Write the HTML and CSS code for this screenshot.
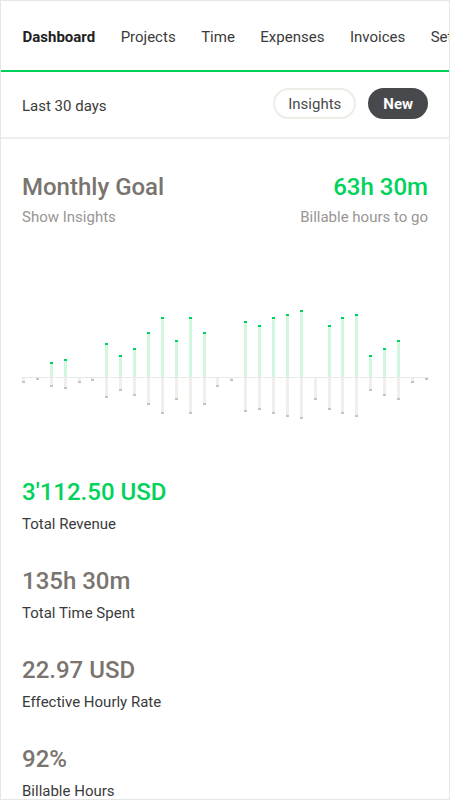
FILE: index.html
```html
<!DOCTYPE html>
<html lang="en">
<head>
  <meta charset="UTF-8" />
  <meta name="viewport" content="width=device-width, initial-scale=1">
  <title>Dashboard</title>
  <link rel="stylesheet" href="styles.css" />
</head>
<body>
  <div class="app">
    <nav class="tabs">
      <a class="tab active" href="#">Dashboard</a>
      <a class="tab" href="#">Projects</a>
      <a class="tab" href="#">Time</a>
      <a class="tab" href="#">Expenses</a>
      <a class="tab" href="#">Invoices</a>
      <a class="tab" href="#">Settings</a>
    </nav>

    <div class="toolbar">
      <span class="range">Last 30 days</span>
      <div class="actions">
        <button class="btn btn-outline">Insights</button>
        <button class="btn btn-dark">New</button>
      </div>
    </div>

    <main class="content">
      <div class="goal">
        <div class="goal-left">
          <h2 class="goal-title">Monthly Goal</h2>
          <p class="muted">Show Insights</p>
        </div>
        <div class="goal-right">
          <div class="goal-value">63h 30m</div>
          <p class="muted">Billable hours to go</p>
        </div>
      </div>

      <div class="chart">
        <div class="day"><div class="up"></div><div class="down"><div class="bar-out" style="height:5px"></div></div></div>
        <div class="day"><div class="up"></div><div class="down"><div class="bar-out" style="height:2px"></div></div></div>
        <div class="day"><div class="up"><div class="bar-in" style="height:15px"></div></div><div class="down"><div class="bar-out" style="height:9px"></div></div></div>
        <div class="day"><div class="up"><div class="bar-in" style="height:18px"></div></div><div class="down"><div class="bar-out" style="height:11px"></div></div></div>
        <div class="day"><div class="up"></div><div class="down"><div class="bar-out" style="height:5px"></div></div></div>
        <div class="day"><div class="up"></div><div class="down"><div class="bar-out" style="height:3px"></div></div></div>
        <div class="day"><div class="up"><div class="bar-in" style="height:34px"></div></div><div class="down"><div class="bar-out" style="height:20px"></div></div></div>
        <div class="day"><div class="up"><div class="bar-in" style="height:22px"></div></div><div class="down"><div class="bar-out" style="height:13px"></div></div></div>
        <div class="day"><div class="up"><div class="bar-in" style="height:29px"></div></div><div class="down"><div class="bar-out" style="height:18px"></div></div></div>
        <div class="day"><div class="up"><div class="bar-in" style="height:45px"></div></div><div class="down"><div class="bar-out" style="height:27px"></div></div></div>
        <div class="day"><div class="up"><div class="bar-in" style="height:60px"></div></div><div class="down"><div class="bar-out" style="height:36px"></div></div></div>
        <div class="day"><div class="up"><div class="bar-in" style="height:37px"></div></div><div class="down"><div class="bar-out" style="height:22px"></div></div></div>
        <div class="day"><div class="up"><div class="bar-in" style="height:60px"></div></div><div class="down"><div class="bar-out" style="height:36px"></div></div></div>
        <div class="day"><div class="up"><div class="bar-in" style="height:45px"></div></div><div class="down"><div class="bar-out" style="height:27px"></div></div></div>
        <div class="day"><div class="up"></div><div class="down"><div class="bar-out" style="height:9px"></div></div></div>
        <div class="day"><div class="up"></div><div class="down"><div class="bar-out" style="height:3px"></div></div></div>
        <div class="day"><div class="up"><div class="bar-in" style="height:56px"></div></div><div class="down"><div class="bar-out" style="height:34px"></div></div></div>
        <div class="day"><div class="up"><div class="bar-in" style="height:52px"></div></div><div class="down"><div class="bar-out" style="height:32px"></div></div></div>
        <div class="day"><div class="up"><div class="bar-in" style="height:60px"></div></div><div class="down"><div class="bar-out" style="height:36px"></div></div></div>
        <div class="day"><div class="up"><div class="bar-in" style="height:63px"></div></div><div class="down"><div class="bar-out" style="height:39px"></div></div></div>
        <div class="day"><div class="up"><div class="bar-in" style="height:67px"></div></div><div class="down"><div class="bar-out" style="height:41px"></div></div></div>
        <div class="day"><div class="up"></div><div class="down"><div class="bar-out" style="height:22px"></div></div></div>
        <div class="day"><div class="up"><div class="bar-in" style="height:52px"></div></div><div class="down"><div class="bar-out" style="height:32px"></div></div></div>
        <div class="day"><div class="up"><div class="bar-in" style="height:60px"></div></div><div class="down"><div class="bar-out" style="height:36px"></div></div></div>
        <div class="day"><div class="up"><div class="bar-in" style="height:63px"></div></div><div class="down"><div class="bar-out" style="height:39px"></div></div></div>
        <div class="day"><div class="up"><div class="bar-in" style="height:22px"></div></div><div class="down"><div class="bar-out" style="height:13px"></div></div></div>
        <div class="day"><div class="up"><div class="bar-in" style="height:29px"></div></div><div class="down"><div class="bar-out" style="height:18px"></div></div></div>
        <div class="day"><div class="up"><div class="bar-in" style="height:37px"></div></div><div class="down"><div class="bar-out" style="height:22px"></div></div></div>
        <div class="day"><div class="up"></div><div class="down"><div class="bar-out" style="height:5px"></div></div></div>
        <div class="day"><div class="up"></div><div class="down"><div class="bar-out" style="height:2px"></div></div></div>
      </div>

      <ul class="stats">
        <li class="stat">
          <div class="stat-value green">3'112.50 USD</div>
          <div class="stat-label">Total Revenue</div>
        </li>
        <li class="stat">
          <div class="stat-value">135h 30m</div>
          <div class="stat-label">Total Time Spent</div>
        </li>
        <li class="stat">
          <div class="stat-value">22.97 USD</div>
          <div class="stat-label">Effective Hourly Rate</div>
        </li>
        <li class="stat">
          <div class="stat-value">92%</div>
          <div class="stat-label">Billable Hours</div>
        </li>
      </ul>
    </main>
  </div>
</body>
</html>
```

FILE: styles.css
```css
* {
  margin: 0;
  padding: 0;
  box-sizing: border-box;
}

html, body {
  width: 100%;
  height: 100%;
  font-family: Roboto, "Liberation Sans", Arial, sans-serif;
  background: #ffffff;
  color: #333333;
}

.app {
  width: 450px;
  height: 800px;
  border: 1px solid #e6e6e6;
  overflow: hidden;
}

/* Top tabs */
.tabs {
  display: flex;
  gap: 25.5px;
  height: 71px;
  padding: 3px 0 0 21.5px;
  align-items: center;
  white-space: nowrap;
  overflow: hidden;
  border-bottom: 2px solid #00d25a;
}

.tab {
  font-size: 15px;
  color: #3a3a3a;
  text-decoration: none;
}

.tab.active {
  font-weight: 700;
  color: #222222;
}

/* Toolbar */
.toolbar {
  display: flex;
  justify-content: space-between;
  align-items: center;
  height: 67px;
  padding: 0 21px 2px;
  border-bottom: 2px solid #eeeeee;
}

.range {
  font-size: 15px;
  color: #3a3a3a;
  padding-top: 4px;
}

.actions {
  display: flex;
  gap: 12px;
}

.btn {
  font-family: inherit;
  font-size: 15px;
  height: 31px;
  border-radius: 16px;
  cursor: pointer;
}

.btn-outline {
  background: #ffffff;
  border: 2px solid #efece7;
  color: #4a4a4a;
  padding: 0 13px;
}

.btn-dark {
  background: #47494d;
  border: 2px solid #47494d;
  color: #ffffff;
  font-weight: 700;
  padding: 0 13px;
}

/* Content */
.content {
  padding: 33px 21px 0;
}

.goal {
  display: flex;
  justify-content: space-between;
}

.goal-right {
  text-align: right;
}

.goal-title,
.goal-value {
  font-size: 24px;
  font-weight: 500;
  line-height: 30px;
}

.goal-title {
  color: #7a746f;
}

.goal-value {
  color: #00d25a;
}

.muted {
  font-size: 15px;
  line-height: 20px;
  color: #999593;
  margin-top: 5px;
}

/* Chart: bars spread edge to edge, axis line drawn under them */
.chart {
  display: flex;
  justify-content: space-between;
  margin: 80px -1px 0 -1px;
  padding: 0 1px;
  background: linear-gradient(#e8e8e8, #e8e8e8) no-repeat 0 70px / 100% 1px;
}

.day {
  width: 3px;
  display: flex;
  flex-direction: column;
}

.up {
  height: 71px;
  display: flex;
  flex-direction: column;
  justify-content: flex-end;
  padding-bottom: 1px;
}

.down {
  height: 42px;
}

.bar-in {
  width: 3px;
  background: #d3f6df;
  border-top: 2px solid #00d25a;
}

.bar-out {
  width: 3px;
  background: #f1efeb;
  border-bottom: 2px solid #c9c3bd;
}

/* Stats */
.stats {
  list-style: none;
  margin-top: 57px;
}

.stat {
  margin-bottom: 32px;
}

.stat-value {
  font-size: 24px;
  font-weight: 500;
  line-height: 30px;
  color: #7a746f;
}

.stat-value.green {
  color: #00d25a;
}

.stat-label {
  font-size: 15px;
  line-height: 20px;
  color: #3a3a3a;
  margin-top: 7px;
}
```
